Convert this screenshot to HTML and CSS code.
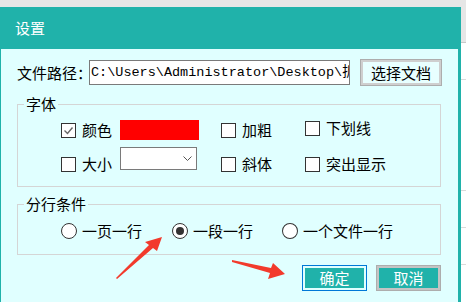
FILE: index.html
```html
<!DOCTYPE html>
<html lang="zh-CN">
<head>
<meta charset="UTF-8">
<meta name="viewport" content="width=device-width, initial-scale=1.0">
<title>设置</title>
<link rel="stylesheet" href="styles.css">
</head>
<body>

<div class="screen">
    <div class="desk">
        <div class="dialog">
            <div class="title">设置</div>
            <div class="dialog-body">

                <!-- 文件路径 -->
                <div class="path-row">
                    <span class="path-label">文件路径：</span>
                    <div class="path-box">C:\Users\Administrator\Desktop\拆</div>
                    <button class="btn-pick">选择文档</button>
                </div>

                <!-- 字体 -->
                <div class="group font-group">
                    <div class="group-title">字体</div>
                    <div class="font-grid">
                        <label class="check"><span class="box"><svg width="13" height="13" viewBox="0 0 13 13"><polyline points="2.5,6.5 5.5,9.5 10.5,3.5" fill="none" stroke="#666" stroke-width="1.4"/></svg></span>颜色</label>
                        <span class="swatch"></span>
                        <label class="check"><span class="box"></span>加粗</label>
                        <label class="check top"><span class="box"></span>下划线</label>

                        <label class="check"><span class="box"></span>大小</label>
                        <div class="combo"><svg width="9" height="5" viewBox="0 0 9 5"><polyline points="0.5,0.5 4.5,4.5 8.5,0.5" fill="none" stroke="#555" stroke-width="1"/></svg></div>
                        <label class="check"><span class="box"></span>斜体</label>
                        <label class="check"><span class="box"></span>突出显示</label>
                    </div>
                </div>

                <!-- 分行条件 -->
                <div class="group split-group">
                    <div class="group-title">分行条件</div>
                    <div class="radio-row">
                        <label class="radio"><span class="dot"></span>一页一行</label>
                        <label class="radio"><span class="dot on"></span>一段一行</label>
                        <label class="radio"><span class="dot"></span>一个文件一行</label>
                    </div>
                </div>

                <div class="actions">
                    <button class="btn btn-ok">确定</button>
                    <button class="btn btn-cancel">取消</button>
                </div>
            </div>
        </div>
    </div>
    <div class="side">
        <div class="side-top"></div>
        <div class="side-cell" style="height: 36px"></div>
        <div class="side-cell" style="height: 110px"></div>
        <div class="side-cell" style="height: 36px"></div>
        <div class="side-cell" style="height: 36px"></div>
    </div>
</div>

<!-- 标注箭头 -->
<svg class="marks" width="466" height="302" viewBox="0 0 466 302">
    <polygon points="116,278 149,245 145,242 162,237 157,251 153,248 117,279" fill="#f23a2c"/>
    <polygon points="232,260 271,268 273,263 285,274 268,279 270,273 232,262" fill="#f23a2c"/>
</svg>

</body>
</html>
```

FILE: styles.css
```css
body {
    margin: 0;
    padding: 0;
    background: #ffffff;
    font-family: "Noto Sans CJK SC", sans-serif;
    font-size: 15px;
    line-height: 16px;
    color: #000000;
}
.screen {
    display: flex;
    height: 302px;
    overflow: hidden;
}
.desk {
    width: 461px;
    padding-top: 7px;
    background: #e6e6e6;
    display: flex;
    flex-direction: column;
}
.dialog {
    flex: 1;
    display: flex;
    flex-direction: column;
    background: #20b2aa;
}
.title {
    height: 42px;
    display: flex;
    align-items: center;
    padding-left: 15px;
    color: #ffffff;
}
.dialog-body {
    flex: 1;
    margin: 0 3px 0 1px;
    padding: 10px 17px 0 16px;
    background: #e0ffff;
}

/* 文件路径 */
.path-row {
    display: flex;
    align-items: center;
}
.path-label {
    flex: 0 0 72px;
    min-width: 0;
    white-space: nowrap;
}
.path-box {
    flex: none;
    width: 258px;
    height: 23px;
    border: 1px solid #7a7a7a;
    background: #ffffff;
    padding-left: 1px;
    box-sizing: content-box;
    font-family: "Liberation Mono", "Noto Sans CJK SC", monospace;
    font-size: 13.5px;
    line-height: 23px;
    white-space: nowrap;
    overflow: hidden;
}
.btn-pick {
    flex: none;
    margin-left: 10px;
    width: 82px;
    height: 27px;
    border: 1px solid #adadad;
    box-shadow: inset 0 0 0 2px #cfcfcf;
    background: #e8ffff;
    font: inherit;
    color: #000000;
    padding: 0;
}

/* 分组 */
.group {
    border: 1px solid #d5d5d5;
}
.group-title {
    width: fit-content;
    margin: -9px 0 0 6px;
    padding: 0 2px;
    background: #e0ffff;
    line-height: 16px;
}
.font-group {
    margin-top: 18px;
    padding-bottom: 14px;
}
.split-group {
    margin-top: 17px;
    padding-bottom: 15px;
}

.font-grid {
    display: grid;
    grid-template-columns: 59px 101px 84px auto;
    grid-template-rows: 20px 25px;
    row-gap: 7px;
    align-items: center;
    margin-top: 8px;
    padding-left: 43px;
}
.font-grid > :nth-child(n+5) {
    align-self: end;
}
.font-grid .top {
    align-self: start;
}
.font-grid .combo {
    align-self: start;
}
.check {
    display: flex;
    align-items: center;
    gap: 6px;
    white-space: nowrap;
}
.box {
    width: 13px;
    height: 13px;
    border: 1px solid #333333;
    background: #ffffff;
    display: flex;
}
.swatch {
    width: 79px;
    height: 20px;
    background: #ff0000;
}
.combo {
    width: 71px;
    height: 21px;
    border: 1px solid #7a7a7a;
    background: #ffffff;
    display: flex;
    align-items: center;
    justify-content: flex-end;
    padding-right: 4px;
}

/* 单选 */
.radio-row {
    display: flex;
    margin-top: 11px;
    padding-left: 43px;
}
.radio {
    display: flex;
    align-items: center;
    gap: 5px;
    width: 111px;
    white-space: nowrap;
}
.radio:nth-child(2) {
    width: 110px;
}
.dot {
    width: 14px;
    height: 14px;
    border: 1px solid #333333;
    border-radius: 50%;
    background: #ffffff;
    display: flex;
    align-items: center;
    justify-content: center;
}
.dot.on::after {
    content: "";
    width: 8px;
    height: 8px;
    border-radius: 50%;
    background: #333333;
}

/* 按钮 */
.actions {
    display: flex;
    justify-content: flex-end;
    gap: 9px;
    margin-top: 10px;
}
.btn {
    width: 65px;
    height: 26px;
    padding: 0;
    font: inherit;
    color: #ffffff;
    background: #20b2aa;
}
.btn-ok {
    border: 1px solid #0078d7;
    box-shadow: inset 0 0 0 2px #e0ffff;
}
.btn-cancel {
    border: 1px solid #adadad;
    box-shadow: inset 0 0 0 2px #c4c4c4;
}

/* 右侧背景 */
.side {
    flex: 1;
    display: flex;
    flex-direction: column;
}
.side-top {
    height: 43px;
    background: #e6e6e6;
    border-bottom: 1px solid #c8c8c8;
    box-sizing: border-box;
}
.side-cell {
    border-bottom: 1px solid #dadada;
}

.marks {
    position: absolute;
    left: 0;
    top: 0;
    pointer-events: none;
}
```
